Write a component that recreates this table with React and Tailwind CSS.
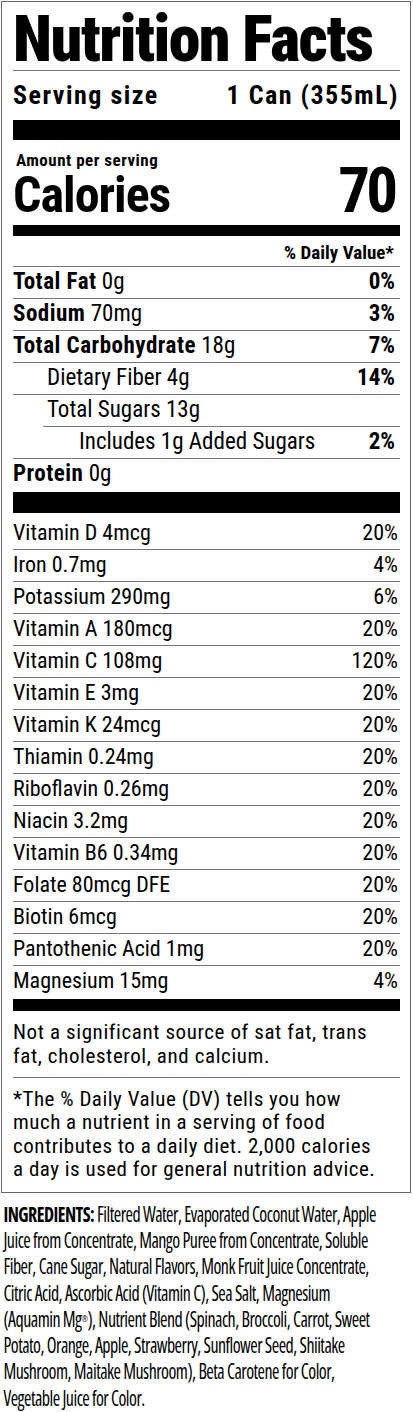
const nutrients = [
  { name: "Total Fat", amount: "0g", dv: "0%" },
  { name: "Sodium", amount: "70mg", dv: "3%" },
  { name: "Total Carbohydrate", amount: "18g", dv: "7%" },
  { label: "Dietary Fiber 4g", dv: "14%", indent: "pl-[34px]" },
  { label: "Total Sugars 13g", indent: "pl-[34px]", shortLine: true },
  { label: "Includes 1g Added Sugars", dv: "2%", indent: "pl-[66px]" },
];

const vitamins = [
  ["Vitamin D 4mcg", "20%"],
  ["Iron 0.7mg", "4%"],
  ["Potassium 290mg", "6%"],
  ["Vitamin A 180mcg", "20%"],
  ["Vitamin C 108mg", "120%"],
  ["Vitamin E 3mg", "20%"],
  ["Vitamin K 24mcg", "20%"],
  ["Thiamin 0.24mg", "20%"],
  ["Riboflavin 0.26mg", "20%"],
  ["Niacin 3.2mg", "20%"],
  ["Vitamin B6 0.34mg", "20%"],
  ["Folate 80mcg DFE", "20%"],
  ["Biotin 6mcg", "20%"],
  ["Pantothenic Acid 1mg", "20%"],
];

// ingredient lines, broken where the printed label breaks them
const ingredients = [
  <>
    <span className="font-bold">INGREDIENTS:</span> Filtered Water, Evaporated Coconut Water, Apple
  </>,
  "Juice from Concentrate, Mango Puree from Concentrate, Soluble",
  "Fiber, Cane Sugar, Natural Flavors, Monk Fruit Juice Concentrate,",
  "Citric Acid, Ascorbic Acid (Vitamin C), Sea Salt, Magnesium",
  <>
    (Aquamin Mg<sup className="text-[9px]">®</sup>), Nutrient Blend (Spinach, Broccoli, Carrot, Sweet
  </>,
  "Potato, Orange, Apple, Strawberry, Sunflower Seed, Shiitake",
  "Mushroom, Maitake Mushroom), Beta Carotene for Color,",
  "Vegetable Juice for Color.",
];

function NutrientRow({ row }) {
  return (
    <div
      className={
        "relative flex h-[32px] items-start justify-between pr-[5px] pt-[3px] text-[23px] leading-[23px] " +
        (row.indent || "")
      }
    >
      <span>
        {row.name ? (
          <>
            <span className="font-bold tracking-[0.5px]">{row.name}</span> {row.amount}
          </>
        ) : (
          row.label
        )}
      </span>
      {row.dv && <span className="font-bold">{row.dv}</span>}
      <div
        className={
          "absolute bottom-0 right-0 h-px bg-[#777] " + (row.shortLine ? "left-[30px]" : "left-0")
        }
      />
    </div>
  );
}

export default function App() {
  return (
    <div className="min-h-[1412px] w-[413px] overflow-hidden bg-white font-[Roboto,sans-serif] font-stretch-condensed text-black">
      <div className="ml-px mt-px w-[410px] border border-[#666] pl-[11px] pr-[10px]">
        <h1 className="border-b border-[#777] pt-[8px] text-[64px] font-black leading-[60px] tracking-[-1.5px]">
          Nutrition Facts
        </h1>
        <div className="flex justify-between pb-[9px] pr-[1px] pt-[9px] text-[26px] font-bold leading-[31px] tracking-[1.5px]">
          <span>Serving size</span>
          <span>1 Can (355mL)</span>
        </div>
        <div className="h-[20px] bg-black" />

        <div className="pl-[3px] pt-[11px] text-[17px] font-bold leading-[18px] tracking-[0.5px]">
          Amount per serving
        </div>
        <div className="flex items-baseline justify-between pb-[8px] pr-[6px] font-bold">
          <span className="text-[50px] leading-[44px] tracking-[-1px]">Calories</span>
          <span className="text-[63px] leading-[44px] tracking-[-4px]">70</span>
        </div>
        <div className="h-[11px] bg-black" />

        <div className="border-b border-[#777] pb-[2px] pr-[6px] pt-[6px] text-right text-[19px] font-bold leading-[22px]">
          % Daily Value*
        </div>
        {nutrients.map((row, i) => (
          <NutrientRow key={i} row={row} />
        ))}
        <div className="h-[33px] pt-[3px] text-[23px] leading-[23px]">
          <span className="font-bold tracking-[0.5px]">Protein</span> 0g
        </div>
        <div className="h-[21px] bg-black" />

        {vitamins.map(([label, dv], i) => (
          <div
            key={label}
            className={
              "flex justify-between border-b border-[#777] pr-[2px] text-[22px] leading-[22px] " +
              (i === 0 ? "h-[37px] pt-[9px]" : "h-[32px] pt-[4px]")
            }
          >
            <span>{label}</span>
            <span>{dv}</span>
          </div>
        ))}
        <div className="flex h-[33px] justify-between pr-[2px] pt-[4px] text-[22px] leading-[22px]">
          <span>Magnesium 15mg</span>
          <span>4%</span>
        </div>
        <div className="h-[12px] bg-black" />

        <p className="whitespace-nowrap border-b border-[#777] pb-[9px] pt-[9px] text-[21px] leading-[24px] tracking-[0.6px]">
          Not a significant source of sat fat, trans
          <br />
          fat, cholesterol, and calcium.
        </p>
        <p className="whitespace-nowrap pb-[10px] pt-[10px] text-[21px] leading-[23.4px] tracking-[0.5px]">
          *The % Daily Value (DV) tells you how
          <br />
          much a nutrient in a serving of food
          <br />
          contributes to a daily diet. 2,000 calories
          <br />
          a day is used for general nutrition advice.
        </p>
      </div>

      <div className="w-[480px] origin-left scale-x-[0.855] whitespace-nowrap px-[4px] pt-[8px] font-['Open_Sans',sans-serif] text-[21px] leading-[26.3px] tracking-[-0.6px]">
        {ingredients.map((line, i) => (
          <div key={i}>{line}</div>
        ))}
      </div>
    </div>
  );
}
